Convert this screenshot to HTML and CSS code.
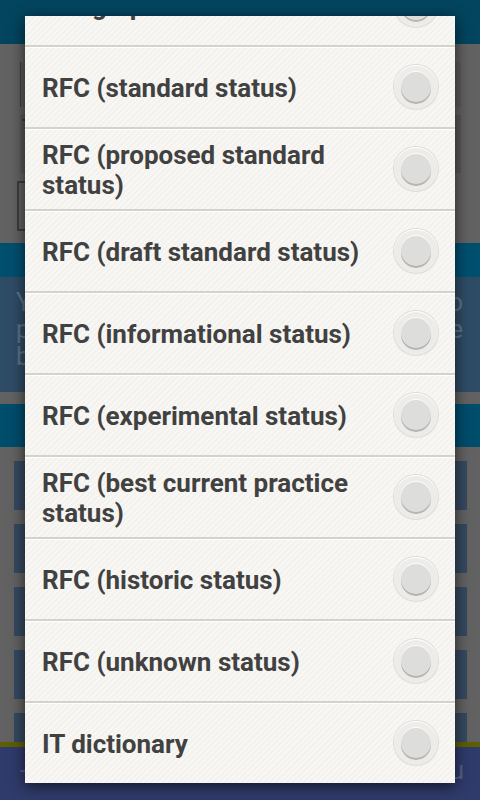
FILE: index.html
```html
<!DOCTYPE html>
<html lang="en">
<head>
    <meta charset="UTF-8">
    <meta name="viewport" content="width=device-width, initial-scale=1.0">
    <title>Dictionaries</title>
    <link rel="stylesheet" href="styles.css">
</head>
<body>
    <div class="app">
        <header class="topbar"></header>
        <section class="form">
            <div class="field field-spinner"></div>
            <div class="field field-input"><span class="field-text">T</span></div>
            <div class="field field-check"></div>
        </section>
        <div class="section-bar"></div>
        <div class="intro">
            <div class="intro-line justify">You may choose the dictionaries to</div>
            <div class="intro-line justify">perform your search in with the</div>
            <div class="intro-line">button below.</div>
        </div>
        <div class="spacer"></div>
        <div class="section-bar tall"></div>
        <ul class="buttons">
            <li></li>
            <li></li>
            <li></li>
            <li></li>
            <li></li>
        </ul>
        <div class="accent"></div>
        <nav class="tabs">
            <span class="tab">-</span>
            <span class="tab"></span>
            <span class="tab"></span>
            <span class="tab"></span>
            <span class="tab"></span>
            <span class="tab">u</span>
        </nav>
    </div>

    <div class="dialog">
        <ul class="choices">
            <li><span class="label">Telegraph/ITU Codes</span><span class="radio"></span></li>
            <li><span class="label">RFC (standard status)</span><span class="radio"></span></li>
            <li><span class="label">RFC (proposed standard status)</span><span class="radio"></span></li>
            <li><span class="label">RFC (draft standard status)</span><span class="radio"></span></li>
            <li><span class="label">RFC (informational status)</span><span class="radio"></span></li>
            <li><span class="label">RFC (experimental status)</span><span class="radio"></span></li>
            <li><span class="label">RFC (best current practice status)</span><span class="radio"></span></li>
            <li><span class="label">RFC (historic status)</span><span class="radio"></span></li>
            <li><span class="label">RFC (unknown status)</span><span class="radio"></span></li>
            <li><span class="label">IT dictionary</span><span class="radio"></span></li>
        </ul>
    </div>
</body>
</html>
```

FILE: styles.css
```css
body {
    margin: 0;
    font-family: Roboto, "Liberation Sans", sans-serif;
    background: #626262;
}
.app {
    width: 480px;
    height: 800px;
    overflow: hidden;
    display: flex;
    flex-direction: column;
}
.topbar {
    height: 44px;
    background: #03455f;
}
.form {
    height: 199px;
    padding: 18px 19px 0 20px;
    box-sizing: border-box;
    display: flex;
    flex-direction: column;
    gap: 8px;
}
.field {
    height: 45px;
    border-left: 1px solid #3d3d3d;
    background: #5c5c5c;
}
.field-input {
    height: 58px;
    background: #595959;
    border-left: none;
    color: #333;
    font-size: 22px;
    padding-left: 2px;
}
.field-check {
    width: 8px;
    height: 46px;
    margin-left: -3px;
    border: 2px solid #3d3d3d;
    border-right: none;
    background: none;
}
.section-bar {
    height: 34px;
    background: #014f6f;
}
.section-bar.tall {
    height: 43px;
    background: #004d6c;
}
.intro {
    height: 115px;
    background: #2f4c66;
    color: #5e7388;
    font-size: 25px;
    line-height: 27px;
    padding: 12px 17px 0 16px;
    box-sizing: border-box;
}
.intro-line {
    white-space: nowrap;
}
.intro-line.justify {
    text-align: justify;
    text-align-last: justify;
}
.spacer {
    height: 12px;
}
.buttons {
    list-style: none;
    margin: 0;
    padding: 14px 13px 0 14px;
    height: 295px;
    box-sizing: border-box;
    display: flex;
    flex-direction: column;
    gap: 14px;
    overflow: hidden;
}
.buttons li {
    flex: none;
    height: 49px;
    background: #364960;
}
.accent {
    height: 5px;
    background: #5e5e05;
}
.tabs {
    flex: 1;
    display: flex;
    background: #2f3b6b;
}
.tab {
    flex: 1;
    color: #56618a;
    font-size: 26px;
    padding: 8px 16px 0 20px;
}
.tab:last-child {
    text-align: right;
}
.dialog {
    position: absolute;
    top: 16px;
    left: 25px;
    width: 430px;
    height: 767px;
    overflow: hidden;
    background-color: #f6f5f1;
    background-image: repeating-linear-gradient(135deg, #f8f7f4 0 2px, #f3f2ee 2px 4px);
    box-shadow: 0 3px 14px rgba(0, 0, 0, 0.65);
}
.choices {
    list-style: none;
    margin: -51px 0 0;
    padding: 0;
}
.choices li {
    height: 80px;
    display: flex;
    align-items: center;
    padding: 0 17px;
    border-bottom: 2px solid #d5d2cb;
    box-shadow: inset 0 1px #ffffff;
}
.label {
    flex: 1;
    font-size: 26px;
    font-weight: bold;
    line-height: 30px;
    color: #414141;
    padding: 2px 20px 0 0;
}
.radio {
    flex: none;
    width: 44px;
    height: 44px;
    border-radius: 50%;
    background: #eeece9;
    box-shadow: 0 0 0 1px #dedcd8, inset 0 1px 1px #ffffff;
    display: flex;
    align-items: center;
    justify-content: center;
}
.radio::after {
    content: "";
    width: 30px;
    height: 30px;
    border-radius: 50%;
    background: #dddddc;
    box-shadow: 0 2px 0 #b5b5b3, 0 -1px 0 #fbfbfb;
}
```
